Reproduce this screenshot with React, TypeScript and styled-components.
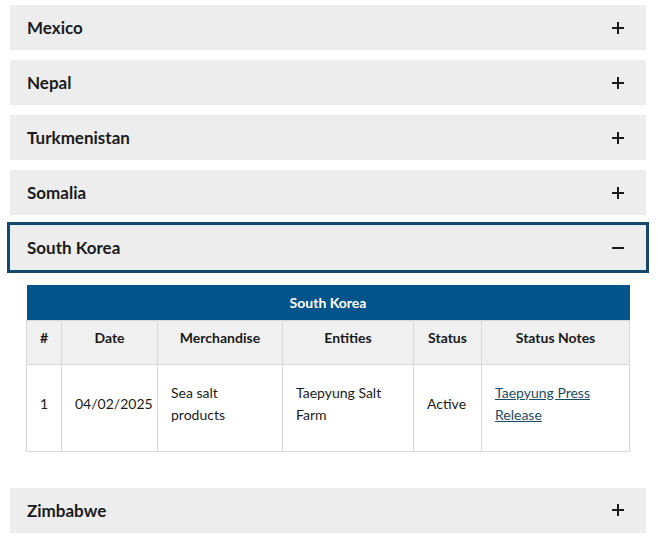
import React from "react";
import styled, { createGlobalStyle } from "styled-components";

const Global = createGlobalStyle`
  html, body { margin: 0; padding: 0; background: #ffffff; }
  body { font-family: Lato, "Open Sans", Arial, sans-serif; color: #1b1b1b; }
  * { box-sizing: border-box; }
`;

const Page = styled.div`
  display: flex;
  flex-direction: column;
  gap: 10px;
  padding: 5px 12px 0 10px;
  width: 658px;
`;

const Item = styled.section``;

const Header = styled.button<{ $open?: boolean }>`
  display: flex;
  align-items: center;
  justify-content: space-between;
  width: 100%;
  height: 45px;
  padding: 0 21px 0 17px;
  border: none;
  background: #ededed;
  font-family: inherit;
  font-size: 17px;
  font-weight: 700;
  color: #1b1b1b;
  text-align: left;
  cursor: pointer;
  outline: ${(p) => (p.$open ? "3px solid #15486a" : "none")};
  box-shadow: ${(p) => (p.$open ? "inset 0 0 0 1px #dff2f7" : "none")};
`;

const Panel = styled.div`
  padding: 15px 17px 26px 16px;
`;

const Table = styled.table`
  width: 100%;
  table-layout: fixed;
  border-collapse: collapse;
  font-size: 14px;
  color: #1b1b1b;
`;

const Col = styled.col<{ $w: number }>`
  width: ${(p) => p.$w}px;
`;

const Caption = styled.th`
  background: #02548b;
  color: #ffffff;
  font-size: 14px;
  font-weight: 700;
  height: 35px;
  text-align: center;
  padding: 0;
`;

const HeadCell = styled.th`
  height: 44px;
  background: #f0f0f0;
  border: 1px solid #d8d8d8;
  font-weight: 700;
  font-size: 14px;
  text-align: center;
  vertical-align: top;
  padding: 8px 4px 0;
`;

const Cell = styled.td<{ $center?: boolean }>`
  height: 87px;
  border: 1px solid #d8d8d8;
  vertical-align: middle;
  text-align: ${(p) => (p.$center ? "center" : "left")};
  padding: 4px 13px 12px;
  line-height: 22px;
`;

const Link = styled.a`
  color: #1c4c66;
  text-decoration: underline;
`;

const Icon = ({ open }: { open?: boolean }) => (
  <svg width="14" height="14" viewBox="0 0 14 14" aria-hidden="true">
    <path d="M1 7h12" stroke="#1b1b1b" strokeWidth="2" />
    {!open && <path d="M7 1v12" stroke="#1b1b1b" strokeWidth="2" />}
  </svg>
);

const countries = ["Mexico", "Nepal", "Turkmenistan", "Somalia"];
const widths = [35, 96, 125, 131, 68, 148];

export default function App() {
  return (
    <>
      <Global />
      <Page>
        {countries.map((c) => (
          <Item key={c}>
            <Header>
              {c}
              <Icon />
            </Header>
          </Item>
        ))}
        <Item>
          <Header $open>
            South Korea
            <Icon open />
          </Header>
          <Panel>
            <Table>
              <colgroup>
                {widths.map((w, i) => (
                  <Col key={i} $w={w} />
                ))}
              </colgroup>
              <thead>
                <tr>
                  <Caption colSpan={6}>South Korea</Caption>
                </tr>
                <tr>
                  <HeadCell>#</HeadCell>
                  <HeadCell>Date</HeadCell>
                  <HeadCell>Merchandise</HeadCell>
                  <HeadCell>Entities</HeadCell>
                  <HeadCell>Status</HeadCell>
                  <HeadCell>Status Notes</HeadCell>
                </tr>
              </thead>
              <tbody>
                <tr>
                  <Cell $center>1</Cell>
                  <Cell>04/02/2025</Cell>
                  <Cell>Sea salt products</Cell>
                  <Cell>Taepyung Salt Farm</Cell>
                  <Cell>Active</Cell>
                  <Cell>
                    <Link href="#">Taepyung Press Release</Link>
                  </Cell>
                </tr>
              </tbody>
            </Table>
          </Panel>
        </Item>
        <Item>
          <Header>
            Zimbabwe
            <Icon />
          </Header>
        </Item>
      </Page>
    </>
  );
}
